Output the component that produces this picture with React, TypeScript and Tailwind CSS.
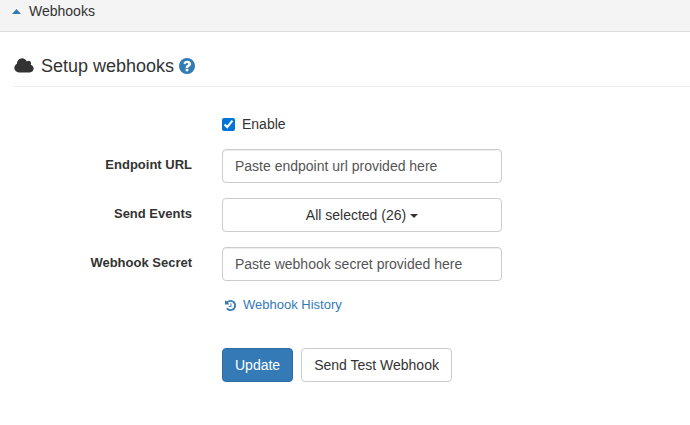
import type { ReactNode } from "react";

function CloudIcon() {
  return (
    <svg viewBox="0 0 1920 1792" className="h-[18px] w-5 shrink-0 fill-current" aria-hidden="true">
      <path d="M1920 1152q0 159-112.5 271.5t-271.5 112.5h-1088q-185 0-316.5-131.5t-131.5-316.5q0-132 71-241.5t187-163.5q-2-28-2-43 0-212 150-362t362-150q158 0 286.5 88t187.5 230q70-62 166-62 106 0 181 75t75 181q0 75-41 138 129 30 213 134.5t84 239.5z" />
    </svg>
  );
}

function QuestionCircleIcon() {
  return (
    <svg viewBox="128 128 1536 1536" className="size-4 fill-current" aria-hidden="true">
      <path d="M1024 1376v-192q0-14-9-23t-23-9h-192q-14 0-23 9t-9 23v192q0 14 9 23t23 9h192q14 0 23-9t9-23zm256-672q0-88-55.5-163t-138.5-116-170-41q-243 0-371 213-15 24 8 42l132 100q7 6 19 6 16 0 25-12 53-68 86-92 34-24 86-24 48 0 85.5 26t37.5 59q0 38-20 61t-68 45q-63 28-115.5 86.5t-52.5 125.5v36q0 14 9 23t23 9h192q14 0 23-9t9-23q0-19 21.5-49.5t54.5-49.5q32-18 49-28.5t46-35 44.5-48 28-60.5 12.5-81zm384 192q0 209-103 385.5t-279.5 279.5-385.5 103-385.5-103-279.5-279.5-103-385.5 103-385.5 279.5-279.5 385.5-103 385.5 103 279.5 279.5 103 385.5z" />
    </svg>
  );
}

function HistoryIcon() {
  return (
    <svg viewBox="128 128 1536 1536" className="size-[11px] fill-current" aria-hidden="true">
      <path d="M1664 896q0 156-61 298t-164 245-245 164-298 61q-172 0-327-72.5t-264-204.5q-7-10-6.5-22.5t8.5-20.5l137-138q10-9 25-9 16 2 23 12 73 95 179 147t225 52q104 0 198.5-40.5t163.5-109.5 109.5-163.5 40.5-198.5-40.5-198.5-109.5-163.5-163.5-109.5-198.5-40.5q-98 0-188 35.5t-160 101.5l137 138q31 30 14 69-17 40-59 40h-448q-26 0-45-19t-19-45v-448q0-42 40-59 39-17 69 14l130 129q107-101 244.5-156.5t284.5-55.5q156 0 298 61t245 164 164 245 61 298zm-640-288v448q0 14-9 23t-23 9h-320q-14 0-23-9t-9-23v-64q0-14 9-23t23-9h224v-352q0-14 9-23t23-9h64q14 0 23 9t9 23z" />
    </svg>
  );
}

const inputClass =
  "block h-[34px] w-full rounded-sm border border-[#ccc] bg-white px-3 text-sm text-[#555] shadow-[inset_0_1px_1px_rgba(0,0,0,0.075)] placeholder:text-[#555]";

function Row({ label, htmlFor, children }: { label: string; htmlFor: string; children: ReactNode }) {
  return (
    <div className="grid grid-cols-[192px_minmax(0,280px)] gap-x-[30px]">
      <label htmlFor={htmlFor} className="pt-[7px] text-right text-[13px] leading-[18px] font-bold">
        {label}
      </label>
      {children}
    </div>
  );
}

export default function App() {
  return (
    <main className="bg-white font-['Liberation_Sans',Arial,sans-serif] text-sm text-[#333]">
      <button
        type="button"
        aria-expanded="true"
        className="flex w-full items-center gap-2 border-b border-[#ddd] bg-[#f4f4f4] px-3 pt-px pb-2.5 text-left leading-5"
      >
        <svg viewBox="0 0 9 5" className="h-[5px] w-[9px] fill-[#337ab7]" aria-hidden="true">
          <path d="M0 5L4.5 0L9 5Z" />
        </svg>
        Webhooks
      </button>

      <h1 className="mt-6 ml-[13px] flex items-center border-b border-[#eee] pb-2.5 pl-px text-lg leading-5">
        <CloudIcon />
        <span className="ml-[7px]">Setup webhooks</span>
        <a href="#help" aria-label="Help" className="ml-[5px] text-[#337ab7]">
          <QuestionCircleIcon />
        </a>
      </h1>

      <form className="mt-[27px] pb-11" onSubmit={(event) => event.preventDefault()}>
        <label className="ml-[222px] flex w-fit items-center gap-[7px] leading-5">
          <input type="checkbox" defaultChecked className="size-[13px] accent-[#0075d7]" />
          Enable
        </label>

        <div className="mt-[15px] flex flex-col gap-[15px]">
          <Row label="Endpoint URL" htmlFor="endpoint">
            <input id="endpoint" type="text" placeholder="Paste endpoint url provided here" className={inputClass} />
          </Row>
          <Row label="Send Events" htmlFor="events">
            <button
              id="events"
              type="button"
              aria-haspopup="listbox"
              className="flex h-[34px] w-full items-center justify-center gap-1 rounded-sm border border-[#ccc] bg-white px-3"
            >
              All selected (26)
              <svg viewBox="0 0 8 4" className="mt-0.5 h-1 w-2 fill-current" aria-hidden="true">
                <path d="M0 0H8L4 4Z" />
              </svg>
            </button>
          </Row>
          <Row label="Webhook Secret" htmlFor="secret">
            <input id="secret" type="text" placeholder="Paste webhook secret provided here" className={inputClass} />
          </Row>
        </div>

        <div className="ml-[222px]">
          <a href="#history" className="mt-[15px] ml-[3px] flex w-fit items-center gap-[7px] text-[13px] leading-[18px] text-[#337ab7]">
            <HistoryIcon />
            Webhook History
          </a>
          <div className="mt-[34px] flex gap-2">
            <button type="submit" className="h-[34px] rounded-sm border border-[#2e6da4] bg-[#337ab7] px-3 text-white">
              Update
            </button>
            <button type="button" className="h-[34px] rounded-sm border border-[#ccc] bg-white px-3">
              Send Test Webhook
            </button>
          </div>
        </div>
      </form>
    </main>
  );
}
